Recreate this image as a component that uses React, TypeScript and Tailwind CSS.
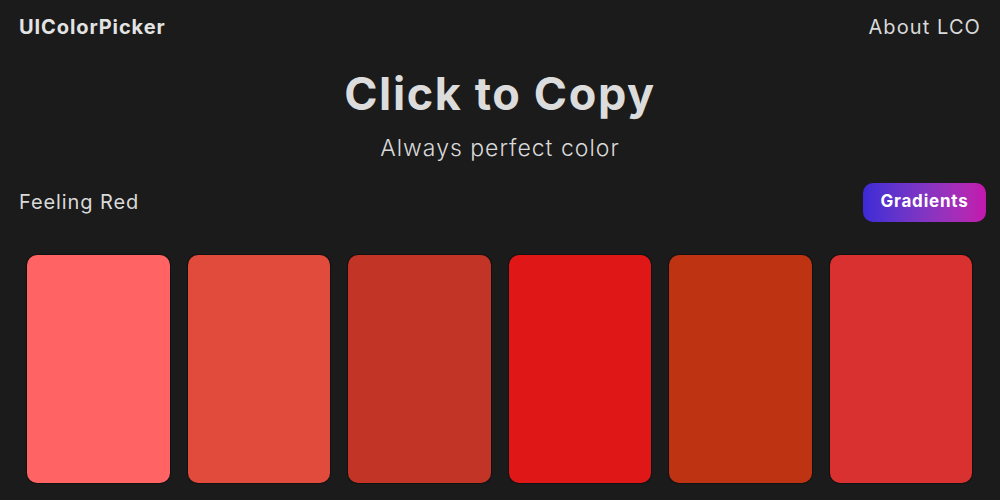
const colors = [
  { hex: "#FF6363", name: "#FF6363" },
  { hex: "#E04B3B", name: "#E04B3B" },
  { hex: "#C13426", name: "#C13426" },
  { hex: "#E01717", name: "#E01717" },
  { hex: "#BE3413", name: "#BE3413" },
  { hex: "#D93030", name: "#D93030" },
];

function App() {
  return (
    <div
      className="min-h-screen w-full bg-[#1b1b1b] text-[#d9d9d9]"
      style={{ fontFamily: "Inter, 'Open Sans', sans-serif" }}
    >
      <nav className="flex items-center justify-between px-[19px] pt-[12px]">
        <a className="text-[20px] font-bold tracking-[0.9px] text-[#e3e3e3]">UIColorPicker</a>
        <a className="text-[20px] font-normal tracking-[1.1px] text-[#d9d9d9]">About LCO</a>
      </nav>

      <header className="mt-[24px] flex flex-col items-center">
        <h1 className="text-[45px] font-bold leading-[56px] tracking-[1.6px] text-[#dcdcdc]">Click to Copy</h1>
        <p className="mt-[9px] text-[23px] font-light tracking-[1px] text-[#d9d9d9]">Always perfect color</p>
      </header>

      <div className="mt-[17px] flex items-center justify-between pl-[19px] pr-[14px]">
        <h2 className="text-[20px] font-normal tracking-[0.9px] text-[#d9d9d9]">Feeling Red</h2>
        <button className="h-[39px] w-[123px] rounded-[10px] bg-gradient-to-r from-[#3b2ad6] to-[#c416ad] text-[17px] font-bold tracking-[0.8px] text-white">
          Gradients
        </button>
      </div>

      <div className="mt-[33px] grid grid-cols-6 gap-[18px] pl-[27px] pr-[28px]">
        {colors.map((c) => (
          <div key={c.hex} className="flex flex-col items-center">
            <div
              className="h-[228px] w-full rounded-[10px] shadow-[0_0_0_1px_rgba(0,0,0,0.35)]"
              style={{ backgroundColor: c.hex }}
            />
            <span className="mt-[12px] text-[15px] font-semibold text-[#d9d9d9]">{c.name}</span>
          </div>
        ))}
      </div>
    </div>
  );
}

export default App;
